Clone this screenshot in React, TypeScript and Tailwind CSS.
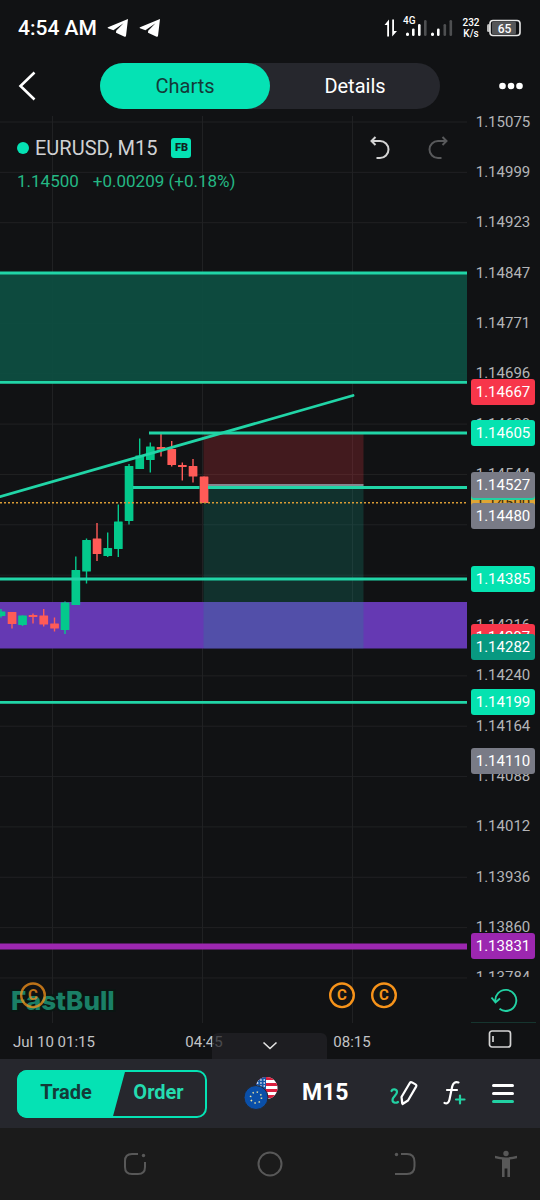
import React from 'react';

const PRICE_TOP = 1.15075;
const TOP_Y = 6;
const PX_PER_UNIT = 66304;

// posición vertical (px) de un precio dentro del gráfico
const priceY = (price: number) => Math.floor(TOP_Y + (PRICE_TOP - price) * PX_PER_UNIT);

const TICKS = [
  '1.15075', '1.14999', '1.14923', '1.14847', '1.14771', '1.14696',
  '1.14620', '1.14544', '1.14468', '1.14392', '1.14316', '1.14240',
  '1.14164', '1.14088', '1.14012', '1.13936', '1.13860', '1.13784',
];

const TAGS = [
  { price: '1.14667', color: 'bg-[#f7364a] text-white' },
  { price: '1.14605', color: 'bg-[#05e2b0] text-white' },
  { price: '1.14500', color: 'bg-[#dfa534] text-[#3d2c08]' },
  { price: '1.14523', color: 'bg-[#22d1a3] text-white' },
  { price: '1.14527', color: 'bg-[#797b86] text-white' },
  { price: '1.14480', color: 'bg-[#797b86] text-white' },
  { price: '1.14385', color: 'bg-[#05e2b0] text-white' },
  { price: '1.14297', color: 'bg-[#f7364a] text-white' },
  { price: '1.14282', color: 'bg-[#089981] text-white' },
  { price: '1.14199', color: 'bg-[#05e2b0] text-white' },
  { price: '1.14110', color: 'bg-[#797b86] text-white' },
  { price: '1.13831', color: 'bg-[#9c27b0] text-white' },
];

const GRID_X = [52, 202, 352];

// x, cuerpo arriba, cuerpo abajo, mecha arriba, mecha abajo, alcista
const CANDLES: [number, number, number, number, number, boolean][] = [
  [1, 495.5, 500, 493, 501.5, true],
  [12, 496, 508, 496, 512.5, false],
  [22.5, 499.5, 509, 499.5, 510, true],
  [33, 499, 501, 497.5, 507.5, false],
  [43.7, 499.5, 508.5, 493, 510.5, false],
  [54.5, 507.5, 512.5, 501.5, 515.5, false],
  [65, 486.5, 514, 485.5, 518, true],
  [75.8, 454, 489, 440.5, 489, true],
  [86.5, 424, 455.5, 422.5, 467.5, true],
  [97, 422.5, 438, 407, 445, false],
  [107.7, 432, 440, 416.5, 441, true],
  [118.3, 405.5, 433, 388.5, 441, true],
  [129, 350, 405, 348, 408.5, true],
  [139.7, 339.5, 353, 322.5, 353, true],
  [150.3, 330.5, 344, 326.5, 356.5, true],
  [161, 331, 333.5, 316.5, 340.5, false],
  [171.7, 333, 349, 325, 350.5, false],
  [182.3, 349, 351, 346.5, 364.5, false],
  [193, 350, 360.5, 343, 366.5, false],
  [204, 360.5, 387, 360.5, 387, false],
];

const EVENTS = [33, 342, 384];

const Telegram = () => (
  <svg width="22" height="20" viewBox="0 0 22 20" fill="#fff">
    <path d="M21 1 1 9.300c-.5.300-.5.800 0 1l5.400 1.900L16.500 5.200 9.200 12.700l-.2 2 8.600 4c.7.300 1.200 0 1.400-.7Z" />
  </svg>
);

const StatusBar = () => (
  <div className="flex h-14 items-center justify-between pl-[18px] pr-[19px]">
    <div className="flex items-center gap-2.5">
      <span className="text-[21px] font-medium leading-7 text-white">4:54 AM</span>
      <Telegram />
      <Telegram />
    </div>
    <div className="flex items-center">
      <svg width="72" height="28" viewBox="0 0 72 28">
        <g fill="#fff">
          <path d="M6 5.500v17H4.200V11H1.500ZM9.200 5.500H11v11.500h3L9.200 22.500Z" />
          <rect x="23" y="18.500" width="3" height="3.500" rx="1.500" />
          <rect x="29" y="14.500" width="2.600" height="7.500" rx="1.300" />
          <rect x="35" y="10" width="2.600" height="12" rx="1.300" />
          <rect x="48" y="18.500" width="3" height="3.500" rx="1.500" />
          <rect x="54" y="14.500" width="2.600" height="7.500" rx="1.300" />
        </g>
        <g fill="#4e4f51">
          <rect x="41" y="6" width="2.600" height="16" rx="1.300" />
          <rect x="60.500" y="10" width="2.600" height="12" rx="1.300" />
          <rect x="66.500" y="6" width="2.600" height="16" rx="1.300" />
        </g>
        <text x="20" y="10" fill="#fff" fontSize="10" fontWeight="500">4G</text>
      </svg>
      <div className="ml-1 w-6 text-center text-[10px] font-medium leading-[11px] text-white">
        <p>232</p>
        <p>K/s</p>
      </div>
      <svg width="34" height="18" viewBox="0 0 34 18" className="ml-1">
        <rect x="0" y="5" width="3" height="8" rx="1.500" fill="#b9b9b9" />
        <rect x="5" y="3" width="24" height="12" rx="1" fill="#555658" />
        <rect x="3" y="1.500" width="30" height="15" rx="3" fill="none" stroke="#e8e8e8" strokeWidth="1.600" />
        <text x="17.500" y="13.500" textAnchor="middle" fill="#fff" fontSize="12" fontWeight="500">65</text>
      </svg>
    </div>
  </div>
);

const Header = () => (
  <header className="grid h-[60px] grid-cols-[100px_1fr_100px] items-center">
    <button aria-label="Back" className="flex h-11 items-center pl-[18px]">
      <svg width="18" height="30" viewBox="0 0 18 30" fill="none" stroke="#fff" strokeWidth="2.600">
        <path d="M16.500 1.500 2.500 15l14 13.500" />
      </svg>
    </button>
    <div className="flex h-[46px] rounded-full bg-[#26272d] text-xl">
      <button className="flex-1 rounded-full bg-[#05e2b4] text-[#143a38]">Charts</button>
      <button className="flex-1 text-white">Details</button>
    </div>
    <button aria-label="More" className="flex h-11 items-center justify-end pr-4">
      <svg width="26" height="8" viewBox="0 0 26 8" fill="#fff">
        <circle cx="4.500" cy="4" r="3.300" />
        <circle cx="13" cy="4" r="3.300" />
        <circle cx="21.500" cy="4" r="3.300" />
      </svg>
    </button>
  </header>
);

const SymbolInfo = () => (
  <div className="absolute inset-x-0 top-0 pl-[17px] pr-[18px] pt-4">
    <div className="flex h-8 items-center">
      <span className="size-3 rounded-full bg-[#05e2b4]"></span>
      <span className="ml-1.5 text-xl text-[#d0d1d3]">EURUSD, M15</span>
      <span className="ml-3.5 flex size-5 items-center justify-center rounded-[3px] bg-[#05e2b4] text-[11px] font-black text-[#10231f]">
        FB
      </span>
      <div className="ml-auto flex gap-9">
        <button aria-label="Undo">
          <svg width="22" height="26" viewBox="0 0 22 26" fill="none" stroke="#d4d4d4" strokeWidth="2">
            <path d="M6.500 2 2.500 6l4 4M2.500 6h8.500a8.500 8.500 0 0 1 0 17H7.500" />
          </svg>
        </button>
        <button aria-label="Redo">
          <svg width="22" height="26" viewBox="0 0 22 26" fill="none" stroke="#58595b" strokeWidth="2">
            <path d="m15.500 2 4 4-4 4M19.500 6h-8.500a8.500 8.500 0 0 0 0 17H14.500" />
          </svg>
        </button>
      </div>
    </div>
    <div className="flex gap-3.5 text-[17px] leading-[34px] text-[#24b884]">
      <span>1.14500</span>
      <span>+0.00209 (+0.18%)</span>
    </div>
  </div>
);

const Chart = () => (
  <svg className="block h-[907px] w-full">
    <g stroke="#202123" strokeWidth="1">
      {TICKS.map((t, i) => (
        <line key={t} x1="0" x2="100%" y1={6 + i * 50.35} y2={6 + i * 50.35} />
      ))}
      {GRID_X.map((x) => (
        <line key={x} x1={x + 0.5} x2={x + 0.5} y1="0" y2="907" />
      ))}
    </g>

    {/* Zonas */}
    <rect x="0" y="157" width="100%" height="109" fill="#0d4f42" fillOpacity=".93" />
    <rect x="0" y="486" width="100%" height="46.500" fill="#673ab7" fillOpacity=".98" />

    {/* Posición corta */}
    <rect x="203.500" y="318" width="160" height="51" fill="#f23645" fillOpacity=".22" />
    <rect x="203.500" y="369" width="160" height="163.500" fill="#12a088" fillOpacity=".22" />

    {CANDLES.map(([x, top, bottom, high, low, up]) => (
      <g key={x} fill={up ? '#04c98c' : '#ff5b57'}>
        <rect x={x - 0.7} y={high} width="1.400" height={low - high} />
        <rect x={x - 4.3} y={top} width="8.700" height={bottom - top} rx=".5" />
      </g>
    ))}

    <g stroke="#21d5a7" strokeWidth="2.800">
      <line x1="0" x2="100%" y1="157" y2="157" />
      <line x1="0" x2="100%" y1="266.300" y2="266.300" />
      <line x1="149" x2="100%" y1="317" y2="317" />
      <line x1="133" x2="199.500" y1="371.500" y2="371.500" />
      <line x1="208" x2="100%" y1="371.500" y2="371.500" />
      <line x1="0" x2="100%" y1="463" y2="463" />
      <line x1="0" x2="100%" y1="586.300" y2="586.300" />
      <line x1="0" x2="353" y1="380.700" y2="279.500" strokeLinecap="round" />
    </g>
    <line x1="208" x2="363.500" y1="369" y2="369" stroke="#85878f" strokeWidth="2" />
    <line x1="0" x2="100%" y1="386.700" y2="386.700" stroke="#d99c35" strokeWidth="1.600" strokeDasharray="2 2" />
    <line x1="0" x2="100%" y1="830.500" y2="830.500" stroke="#9c27b0" strokeWidth="6" />

    {/* Marca de agua */}
    <text
      x="11"
      y="894"
      fontSize="26"
      fontWeight="800"
      className="font-['Inter',sans-serif]"
      fill="#1a7f66"
      stroke="#0a1512"
      strokeWidth="4"
      paintOrder="stroke"
    >
      FastBull
    </text>

    {/* Eventos del calendario, el primero queda bajo la marca */}
    {EVENTS.map((x, i) => (
      <g key={x} opacity={i === 0 ? 0.75 : 1}>
        <circle cx={x} cy="879.300" r="11.800" fill="#141414" fillOpacity={i === 0 ? 0 : 1} stroke="#f7931a" strokeWidth="2.400" />
        <text x={x} y="884" textAnchor="middle" fill="#f7931a" fontSize="15" fontWeight="700">C</text>
      </g>
    ))}
  </svg>
);

const TimeAxis = () => (
  <div className="relative h-9 text-[15px] leading-[38px] text-[#c3c4c6]">
    <span className="absolute left-[54px] -translate-x-1/2 whitespace-nowrap">Jul 10 01:15</span>
    <span className="absolute left-[204px] -translate-x-1/2">04:45</span>
    <span className="absolute left-[352px] -translate-x-1/2">08:15</span>
    <button
      aria-label="Collapse"
      className="absolute bottom-0 left-[212px] flex h-[26px] w-[115px] items-center justify-center rounded-t-md bg-[#212226]/75"
    >
      <svg width="16" height="10" viewBox="0 0 16 10" fill="none" stroke="#e4e4e4" strokeWidth="1.600">
        <path d="m1.500 1.500 6.500 6 6.500-6" />
      </svg>
    </button>
  </div>
);

const PriceAxis = () => (
  <div className="w-[73px] shrink-0 text-[15px] leading-[26px]">
    <div className="relative h-[861px] overflow-hidden">
      {TICKS.map((t, i) => (
        <span
          key={t}
          className="absolute left-1 w-16 -translate-y-1/2 text-center text-[#b4b5b8]"
          style={{ top: Math.floor(TOP_Y + i * 50.35) }}
        >
          {t}
        </span>
      ))}
      {TAGS.map((tag) => (
        <span
          key={tag.price}
          className={`absolute left-1 h-[26px] w-16 -translate-y-1/2 rounded-[3px] text-center ${tag.color}`}
          style={{ top: priceY(Number(tag.price)) }}
        >
          {tag.price}
        </span>
      ))}
    </div>
    <div className="mx-1 flex h-[46px] items-center justify-center border-b border-[#16352f]">
      <button aria-label="Reset scale">
        <svg width="28" height="26" viewBox="0 0 28 26" fill="none" stroke="#22d1a3" strokeWidth="1.900">
          <path d="M5.500 15.500A10.500 10.500 0 1 1 9.500 21.800M1.500 10.500l4 5 4.500-4" />
        </svg>
      </button>
    </div>
    <div className="flex h-9 justify-center pr-2 pt-1.5">
      <button aria-label="Full screen" className="h-5">
        <svg width="24" height="20" viewBox="0 0 24 20" fill="none" stroke="#d4d4d4" strokeWidth="1.700">
          <rect x="1.500" y="2" width="21" height="16" rx="2.500" />
          <path d="M5 7v6" />
        </svg>
      </button>
    </div>
  </div>
);

const Flags = () => (
  <svg width="34" height="36" viewBox="0 0 34 36">
    <defs>
      <clipPath id="us">
        <circle cx="22.500" cy="12" r="11" />
      </clipPath>
    </defs>
    <g clipPath="url(#us)">
      <rect x="11" y="1" width="23" height="23" fill="#fff" />
      {[1, 7, 13, 19].map((y) => (
        <rect key={y} x="11" y={y} width="23" height="3" fill="#d8203f" />
      ))}
      <rect x="11" y="1" width="11" height="12" fill="#1658a8" />
      {[4, 7, 10].map((y) => (
        <path key={y} d={`M13 ${y}h9`} stroke="#fff" strokeWidth="1.300" strokeDasharray="1.300 2" />
      ))}
    </g>
    <circle cx="12" cy="21.500" r="12" fill="#0a4fa8" stroke="#26272d" strokeWidth="1" />
    <circle cx="12" cy="21.500" r="5.500" fill="none" stroke="#e8e3a0" strokeWidth="1.600" strokeDasharray="1.400 2.920" />
  </svg>
);

const Toolbar = () => (
  <div className="flex h-[69px] items-center bg-[#26272d] pl-[17px] pr-[26px]">
    <div className="relative h-12 w-[190px]">
      <svg width="190" height="48" className="absolute inset-0">
        <path d="M10 0h98.500L95.500 48H10A10 10 0 0 1 0 38V10A10 10 0 0 1 10 0Z" fill="#05e2b4" />
        <rect x="1" y="1" width="188" height="46" rx="9" fill="none" stroke="#05e2b4" strokeWidth="2" />
      </svg>
      <div className="relative flex h-full pb-1 text-xl font-bold">
        <button className="w-[98px] text-[#143a38]">Trade</button>
        <button className="w-[87px] text-[#24dcb0]">Order</button>
      </div>
    </div>
    <button aria-label="Symbol" className="ml-[37px]">
      <Flags />
    </button>
    <button className="ml-6 text-[23px] font-bold text-white">M15</button>
    <div className="ml-auto flex items-center gap-[25px]">
      <button aria-label="Draw">
        <svg width="28" height="28" viewBox="0 0 28 28" fill="none" strokeWidth="2.200" strokeLinecap="round" strokeLinejoin="round">
          <path d="M1.500 11C2.500 8.500 7 9 7 12S2.500 16.500 2.500 20 6.500 23 8 22" stroke="#22d1a3" />
          <path d="m11.500 17 8.300-14q.8-1.300 2.200-.6l3.500 2q1.300.8.600 2.200L18 20.500l-5.500 3.500ZM11.500 17l.7 6.500" stroke="#fff" />
        </svg>
      </button>
      <button aria-label="Indicators">
        <svg width="24" height="28" viewBox="0 0 24 28" fill="none" strokeWidth="2.200" strokeLinecap="round">
          <path d="M15.500 2.500C12 1.500 10 3 9.200 6.500L6.500 19.500C5.800 22.800 4 24 1.500 23M4 10h10" stroke="#fff" />
          <path d="M17 15.500v8M13 19.500h8.500" stroke="#22d1a3" />
        </svg>
      </button>
      <button aria-label="Menu" className="flex flex-col gap-[5px]">
        <span className="h-[3px] w-[22px] rounded-full bg-white"></span>
        <span className="h-[3px] w-[22px] rounded-full bg-white"></span>
        <span className="h-[3px] w-[22px] rounded-full bg-[#22d1a3]"></span>
      </button>
    </div>
  </div>
);

const SystemNav = () => (
  <nav className="grid h-[72px] grid-cols-[2fr_2fr_2fr_1fr] items-center justify-items-center bg-[#1b1b1b] pl-[12.5%]">
    <button aria-label="Recent apps">
      <svg width="26" height="26" viewBox="0 0 26 26" fill="none" stroke="#585858" strokeWidth="2">
        <path d="M16 3h-6Q3 3 3 10v6q0 7 7 7h6q7 0 7-7v-5" />
        <circle cx="21.500" cy="4.500" r="1.700" fill="#585858" stroke="none" />
      </svg>
    </button>
    <button aria-label="Home">
      <svg width="26" height="26" viewBox="0 0 26 26" fill="none" stroke="#585858" strokeWidth="2">
        <circle cx="13" cy="13" r="11.500" />
      </svg>
    </button>
    <button aria-label="Back">
      <svg width="26" height="26" viewBox="0 0 26 26" fill="none" stroke="#585858" strokeWidth="2">
        <path d="M9 3h6q7.500 0 7.500 8v4q0 8-7.500 8H3" />
        <circle cx="4.500" cy="3.500" r="1.700" fill="#585858" stroke="none" />
      </svg>
    </button>
    <button aria-label="Accessibility">
      <svg width="26" height="30" viewBox="0 0 26 30" fill="#585858">
        <circle cx="13" cy="4.500" r="2.700" />
        <path d="M2 6.800q11 3.200 22 0v2.400q-3.500 1-7 1.300V28h-2.600v-8.500h-2.800V28H9V10.500q-3.500-.3-7-1.300Z" />
      </svg>
    </button>
  </nav>
);

const App: React.FC = () => {
  return (
    <div className="overflow-hidden bg-[#111214] font-['Roboto',sans-serif]">
      <StatusBar />
      <Header />
      <main className="flex">
        <div className="relative min-w-0 flex-1">
          <Chart />
          <TimeAxis />
          <SymbolInfo />
        </div>
        <PriceAxis />
      </main>
      <Toolbar />
      <SystemNav />
    </div>
  );
};

export default App;
